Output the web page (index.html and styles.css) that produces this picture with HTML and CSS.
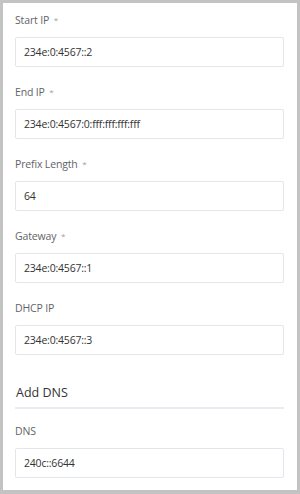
FILE: index.html
```html
<!DOCTYPE html>
<html>
<head>
<meta charset="utf-8">
<link rel="stylesheet" href="styles.css">
</head>
<body>
<div class="panel">
  <div class="field">
    <div class="label">Start IP <span class="req">*</span></div>
    <div class="input">234e:0:4567::2</div>
  </div>
  <div class="field">
    <div class="label">End IP <span class="req">*</span></div>
    <div class="input">234e:0:4567:0:fff:fff:fff:fff</div>
  </div>
  <div class="field">
    <div class="label">Prefix Length <span class="req">*</span></div>
    <div class="input">64</div>
  </div>
  <div class="field">
    <div class="label">Gateway <span class="req">*</span></div>
    <div class="input">234e:0:4567::1</div>
  </div>
  <div class="field">
    <div class="label">DHCP IP</div>
    <div class="input">234e:0:4567::3</div>
  </div>
  <div class="section">Add DNS</div>
  <div class="field">
    <div class="label">DNS</div>
    <div class="input">240c::6644</div>
  </div>
</div>
</body>
</html>
```
FILE: styles.css
```css
html, body {
  margin: 0;
  padding: 0;
  background: #c3c3c3;
  height: 494px;
  overflow: hidden;
}
.panel {
  box-sizing: border-box;
  margin: 3px 3px 0 3px;
  width: 294px;
  height: 487px;
  background: #ffffff;
  padding: 7px 13px 0 12px;
  font-family: "Open Sans", "Noto Sans", sans-serif;
}
.field {
  display: flex;
  flex-direction: column;
  gap: 7px;
  margin-bottom: 15px;
}
.label {
  height: 20px;
  line-height: 20px;
  font-size: 10.5px;
  letter-spacing: -0.15px;
  color: #5f6368;
}
.req {
  color: #9aa0a6;
  font-size: 8px;
  vertical-align: 1px;
  margin-left: 2px;
}
.input {
  box-sizing: border-box;
  height: 30px;
  border: 1px solid #e2e6ea;
  border-radius: 2px;
  padding: 0 8px;
  line-height: 28px;
  font-size: 10.5px;
  letter-spacing: -0.2px;
  color: #333333;
}
.section {
  font-size: 12.5px;
  color: #333333;
  line-height: 20px;
  padding: 13px 0 4px 1px;
  border-bottom: 2px solid #e9edf1;
  margin-bottom: 12px;
}
```
